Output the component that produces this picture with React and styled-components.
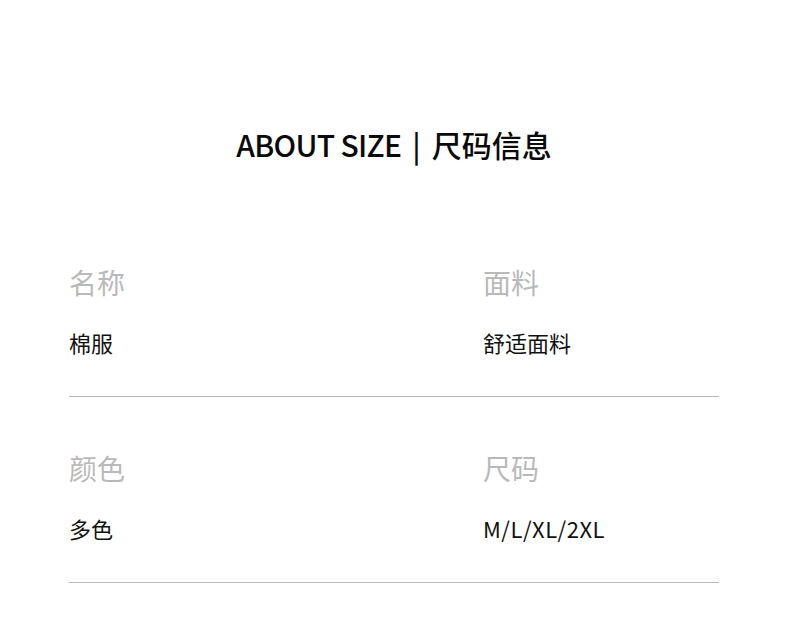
import React from 'react'
import styled, { createGlobalStyle } from 'styled-components'

const GlobalStyle = createGlobalStyle`
  html, body {
    margin: 0;
    padding: 0;
    background: #ffffff;
  }
  body {
    font-family: "Noto Sans CJK SC", "Noto Sans", sans-serif;
  }
`

const rows = [
    [
        { label: '名称', value: '棉服' },
        { label: '面料', value: '舒适面料' },
    ],
    [
        { label: '颜色', value: '多色' },
        { label: '尺码', value: 'M/L/XL/2XL', latin: true },
    ],
]

export default function App() {
    return (
        <Page>
            <GlobalStyle />
            <Title>
                <TitleEn>ABOUT SIZE</TitleEn>
                <Bar>|</Bar>
                <span>尺码信息</span>
            </Title>
            <Table>
                {rows.map((row, i) => (
                    <Row key={i}>
                        {row.map(cell => (
                            <Cell key={cell.label}>
                                <Label>{cell.label}</Label>
                                <Value $latin={cell.latin}>{cell.value}</Value>
                            </Cell>
                        ))}
                    </Row>
                ))}
            </Table>
        </Page>
    )
}

// Styled Components
const Page = styled.div`
    width: 790px;
    height: 627px;
    box-sizing: border-box;
    padding: 124px 71px 0 69px;
    overflow: hidden;
`

const Title = styled.h1`
    margin: 0;
    display: flex;
    justify-content: center;
    align-items: center;
    gap: 11px;
    font-size: 30px;
    line-height: 40px;
    font-weight: 500;
    color: #0a0a0a;
`

const TitleEn = styled.span`
    letter-spacing: -0.7px;
`

const Bar = styled.span`
    font-weight: 500;
`

const Table = styled.div`
    margin-top: 100px;
`

const Row = styled.div`
    display: grid;
    grid-template-columns: 414px 1fr;
    padding-bottom: 40px;
    border-bottom: 1px solid #b8b8b8;
    & + & {
        padding-top: 53px;
    }
`

const Cell = styled.div`
    display: flex;
    flex-direction: column;
`

const Label = styled.div`
    font-size: 28px;
    line-height: 36px;
    color: #b9b9b9;
`

const Value = styled.div`
    margin-top: 28px;
    font-size: 22px;
    line-height: 28px;
    color: #111;
    letter-spacing: ${props => props.$latin ? '0.5px' : '0'};
`
